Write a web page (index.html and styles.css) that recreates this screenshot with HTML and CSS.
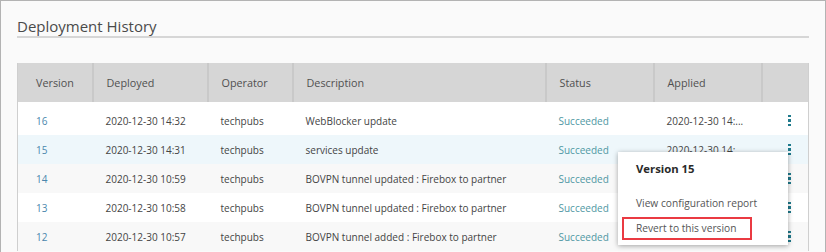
FILE: index.html
```html
<!DOCTYPE html>
<html lang="en">
<head>
    <meta charset="UTF-8">
    <title>Deployment History</title>
    <link rel="stylesheet" href="styles.css">
</head>
<body>
    <div class="frame">
        <h2 class="title">Deployment History</h2>

        <table class="history">
            <colgroup>
                <col class="c-version">
                <col class="c-deployed">
                <col class="c-operator">
                <col class="c-desc">
                <col class="c-status">
                <col class="c-applied">
                <col class="c-menu">
            </colgroup>
            <thead>
                <tr>
                    <th class="first">Version</th>
                    <th>Deployed</th>
                    <th>Operator</th>
                    <th>Description</th>
                    <th>Status</th>
                    <th>Applied</th>
                    <th class="last"></th>
                </tr>
            </thead>
            <tbody>
                <tr class="top">
                    <td class="ver">16</td>
                    <td>2020-12-30 14:32</td>
                    <td>techpubs</td>
                    <td>WebBlocker update</td>
                    <td class="ok">Succeeded</td>
                    <td>2020-12-30 14:...</td>
                    <td class="more"><span class="dots"><i></i><i></i><i></i></span></td>
                </tr>
                <tr class="active">
                    <td class="ver">15</td>
                    <td>2020-12-30 14:31</td>
                    <td>techpubs</td>
                    <td>services update</td>
                    <td class="ok">Succeeded</td>
                    <td>2020-12-30 14:...</td>
                    <td class="more"><span class="dots"><i></i><i></i><i></i></span></td>
                </tr>
                <tr class="alt">
                    <td class="ver">14</td>
                    <td>2020-12-30 10:59</td>
                    <td>techpubs</td>
                    <td>BOVPN tunnel updated : Firebox to partner</td>
                    <td class="ok">Succeeded</td>
                    <td>2020-12-30 10:...</td>
                    <td class="more"><span class="dots"><i></i><i></i><i></i></span></td>
                </tr>
                <tr>
                    <td class="ver">13</td>
                    <td>2020-12-30 10:58</td>
                    <td>techpubs</td>
                    <td>BOVPN tunnel updated : Firebox to partner</td>
                    <td class="ok">Succeeded</td>
                    <td>2020-12-30 10:...</td>
                    <td class="more"><span class="dots"><i></i><i></i><i></i></span></td>
                </tr>
                <tr class="alt">
                    <td class="ver">12</td>
                    <td>2020-12-30 10:57</td>
                    <td>techpubs</td>
                    <td>BOVPN tunnel added : Firebox to partner</td>
                    <td class="ok">Succeeded</td>
                    <td>2020-12-30 10:...</td>
                    <td class="more"><span class="dots"><i></i><i></i><i></i></span></td>
                </tr>
            </tbody>
        </table>

        <!-- Меню действий для версии 15 -->
        <div class="menu">
            <div class="menu-title">Version 15</div>
            <div class="menu-item">View configuration report</div>
            <div class="menu-item marked">Revert to this version</div>
        </div>
    </div>
</body>
</html>
```

FILE: styles.css
```css
/* Общие настройки */
body {
    margin: 0;
    padding: 0;
    font-family: "Open Sans", "Liberation Sans", sans-serif;
    color: #444;
}

/* Рамка страницы */
.frame {
    position: relative;
    height: 252px;
    box-sizing: border-box;
    border: 1px solid #b3b3b3;
    border-bottom: none;
    background-color: #fafafa;
    padding: 0 16px;
    overflow: hidden;
}

.title {
    margin: 0;
    padding-top: 15px;
    font-size: 15px;
    font-weight: normal;
    line-height: 20px;
    color: #4a4a4a;
    border-bottom: 2px solid #d6d6d6;
}

/* Таблица */
.history {
    width: 100%;
    margin-top: 25px;
    border-collapse: collapse;
    table-layout: fixed;
    border-left: 1px solid #cfcfcf;
    border-right: 1px solid #cfcfcf;
    font-size: 10px;
}

.c-version { width: 75px; }
.c-deployed { width: 115px; }
.c-operator { width: 85px; }
.c-desc { width: 253px; }
.c-status { width: 108px; }
.c-applied { width: 108px; }

.history th {
    height: 39px;
    padding: 0 0 0 13px;
    background-color: #d6d6d6;
    border-right: 2px solid #c9c9c9;
    font-weight: normal;
    text-align: left;
    color: #505050;
    font-size: 10.8px;
}

.history th.first { padding-left: 18px; }
.history th.last { border-right: none; }

.history td {
    height: 29px;
    padding: 0 0 0 13px;
    background-color: #fff;
    white-space: nowrap;
    overflow: hidden;
}

.history td.ver {
    padding-left: 18px;
    color: #4a87ad;
}

.history tr.top td {
    height: 33px;
    padding-top: 4px;
    box-sizing: border-box;
}

.history tr.alt td { background-color: #f8f8f8; }
.history tr.active td { background-color: #eef7fb; }

.history td.ok { color: #4f97a3; }

.history td.more {
    padding-left: 26px;
}

/* Иконка "три точки" */
.dots {
    display: flex;
    flex-direction: column;
    gap: 2px;
    width: 3px;
}

.dots i {
    display: block;
    width: 3px;
    height: 2.5px;
    background-color: #1f7a8c;
}

/* Выпадающее меню */
.menu {
    position: absolute;
    left: 617px;
    top: 151px;
    width: 170px;
    height: 93px;
    background-color: #fff;
    box-shadow: 0 1px 5px rgba(0, 0, 0, .35);
    display: flex;
    flex-direction: column;
    padding: 7px 0 0 4px;
    box-sizing: border-box;
}

.menu-title {
    padding-left: 14px;
    font-size: 11.3px;
    font-weight: bold;
    color: #2a2a2a;
    line-height: 20px;
}

.menu-item {
    padding-left: 14px;
    font-size: 10.2px;
    line-height: 20px;
    color: #555;
    margin-top: 14px;
}

.menu-item.marked {
    margin-top: 4px;
    width: 130px;
    box-sizing: border-box;
    border: 2px solid #ea3a42;
    padding-left: 12px;
    line-height: 19px;
}
```
